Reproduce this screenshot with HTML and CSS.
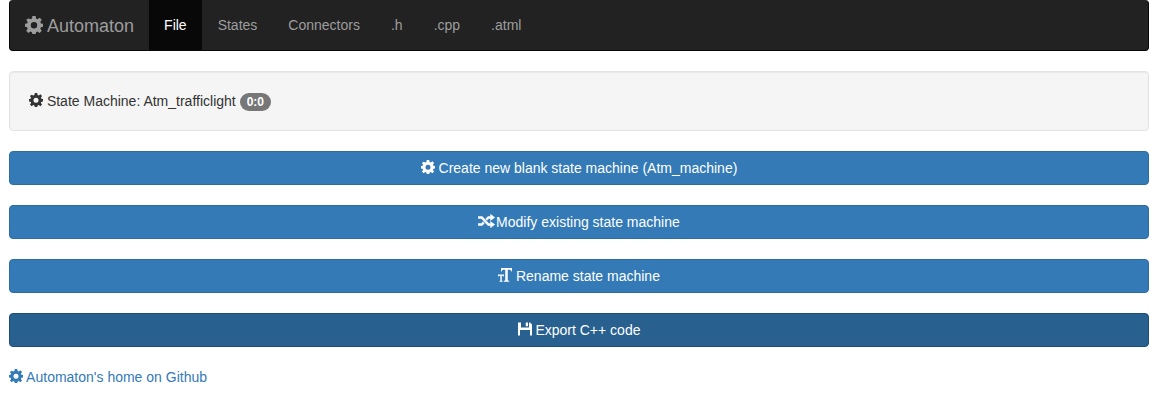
FILE: index.html
```html
<!DOCTYPE html>
<html lang="en">
<head>
<meta charset="utf-8">
<title>Automaton</title>
<link rel="stylesheet" href="styles.css">
</head>
<body>
<svg class="sprite" aria-hidden="true">
  <symbol id="cog" viewBox="0 0 28 28">
    <path fill-rule="evenodd" d="M11.500 0h5l.7 4 2.300 1 3.300-2.300 3.300 3.300-2.300 3.300 1 2.300 3.200.6v4.600l-3.200.7-1 2.300 2.300 3.300-3.300 3.300-3.300-2.300-2.300 1-.7 3.200h-5l-.7-3.200-2.300-1-3.300 2.300-3.300-3.300 2.300-3.300-1-2.300L0 16.800v-4.600l3.200-.6 1-2.300L1.900 6l3.300-2.300L8.500 5l2.300-1zM14 9.300a5 5 0 1 0 0 10 5 5 0 0 0 0-10z"/>
  </symbol>
  <symbol id="random" viewBox="0 0 34 28">
    <path stroke="currentColor" d="M.5 5h8l13 14H25v-4l8.500 6.200L25 27.500V23h-5.200l-13-14H.5zM.5 19h6.300l3.300-3.600 2.700 2.900L8.500 23h-8zM19.800 5H25V.5l8.500 6.300L25 13V9h-3.500l-3.400 3.700-2.700-2.900z"/>
  </symbol>
  <symbol id="text-size" viewBox="0 0 28 28">
    <path d="M6 0h22v7h-1.400c-.4-2.600-1.600-3.500-4.100-3.500H19.500v20c0 1.600.8 2 3 2.200V27.500H11.500v-1.800c2.200-.2 3-.6 3-2.200v-20h-3C9 3.500 7.800 4.400 7.400 7H6zM0 13h12v4h-1c-.3-1-.8-1.500-2.200-1.500H7.500v9c0 1 .5 1.300 1.700 1.400v1.600H3v-1.600c1.200-.1 1.700-.4 1.700-1.400v-9H3.200C1.800 15.500 1.300 16 1 17H0z"/>
  </symbol>
  <symbol id="floppy" viewBox="0 0 28 28">
    <path fill-rule="evenodd" d="M0 1h6v10h16V1h2l4 4v22h-4V16H4v11H0zM15.500 1h4.500v7.500h-4.500z"/>
  </symbol>
</svg>
<nav class="navbar">
  <a class="brand" href="#"><svg class="icon icon-brand" aria-hidden="true"><use href="#cog"/></svg> Automaton</a>
  <ul class="tabs">
    <li><a class="tab active" href="#file">File</a></li>
    <li><a class="tab" href="#states">States</a></li>
    <li><a class="tab" href="#connectors">Connectors</a></li>
    <li><a class="tab" href="#h">.h</a></li>
    <li><a class="tab" href="#cpp">.cpp</a></li>
    <li><a class="tab" href="#atml">.atml</a></li>
  </ul>
</nav>
<main class="content">
  <div class="well"><svg class="icon" aria-hidden="true"><use href="#cog"/></svg> State Machine: Atm_trafficlight <span class="badge">0:0</span></div>
  <button class="btn" type="button"><svg class="icon" aria-hidden="true"><use href="#cog"/></svg> Create new blank state machine (Atm_machine)</button>
  <button class="btn" type="button"><svg class="icon icon-random" aria-hidden="true"><use href="#random"/></svg> Modify existing state machine</button>
  <button class="btn" type="button"><svg class="icon" aria-hidden="true"><use href="#text-size"/></svg> Rename state machine</button>
  <button class="btn btn-focus" type="button"><svg class="icon" aria-hidden="true"><use href="#floppy"/></svg> Export C++ code</button>
  <div><a class="home" href="#github"><svg class="icon" aria-hidden="true"><use href="#cog"/></svg> Automaton's home on Github</a></div>
</main>
</body>
</html>
```
FILE: styles.css
```css
* {
  box-sizing: border-box;
}

body {
  margin: 0;
  padding: 0 11px 0 9px;
  background: #fff;
  color: #333;
  font: 14px/20px "Liberation Sans", Arial, sans-serif;
}

a {
  text-decoration: none;
}

.sprite {
  position: absolute;
  width: 0;
  height: 0;
}

.icon {
  width: 14px;
  height: 14px;
  fill: currentColor;
  vertical-align: -1px;
}

.icon-brand {
  width: 18px;
  height: 18px;
  vertical-align: -2px;
}

.icon-random {
  width: 17px;
  margin-right: -3px;
}

.navbar {
  display: flex;
  border: 1px solid #080808;
  border-top: 0;
  border-radius: 4px;
  background: #222;
  overflow: hidden;
}

.brand {
  padding: 16px 15px 14px;
  color: #9d9d9d;
  font-size: 18px;
}

.tabs {
  display: flex;
  gap: 1px;
  margin: 0;
  padding: 0;
  list-style: none;
}

.tab {
  display: block;
  padding: 15px;
  color: #9d9d9d;
}

.tab.active {
  background: #080808;
  color: #fff;
}

.content {
  display: flex;
  flex-direction: column;
  gap: 20px;
  padding-top: 20px;
}

.well {
  padding: 19px;
  border: 1px solid #e3e3e3;
  border-radius: 4px;
  background: #f5f5f5;
  box-shadow: inset 0 1px 1px rgba(0, 0, 0, 0.05);
}

.badge {
  display: inline-block;
  padding: 3px 7px;
  border-radius: 10px;
  background: #777;
  color: #fff;
  font-size: 12px;
  font-weight: bold;
  line-height: 12px;
  vertical-align: middle;
}

.btn {
  width: 100%;
  padding: 6px 12px;
  border: 1px solid #2e6da4;
  border-radius: 4px;
  background: #337ab7;
  color: #fff;
  font: inherit;
  cursor: pointer;
}

.btn-focus {
  border-color: #204d74;
  background: #286090;
}

.home {
  color: #337ab7;
}
```
